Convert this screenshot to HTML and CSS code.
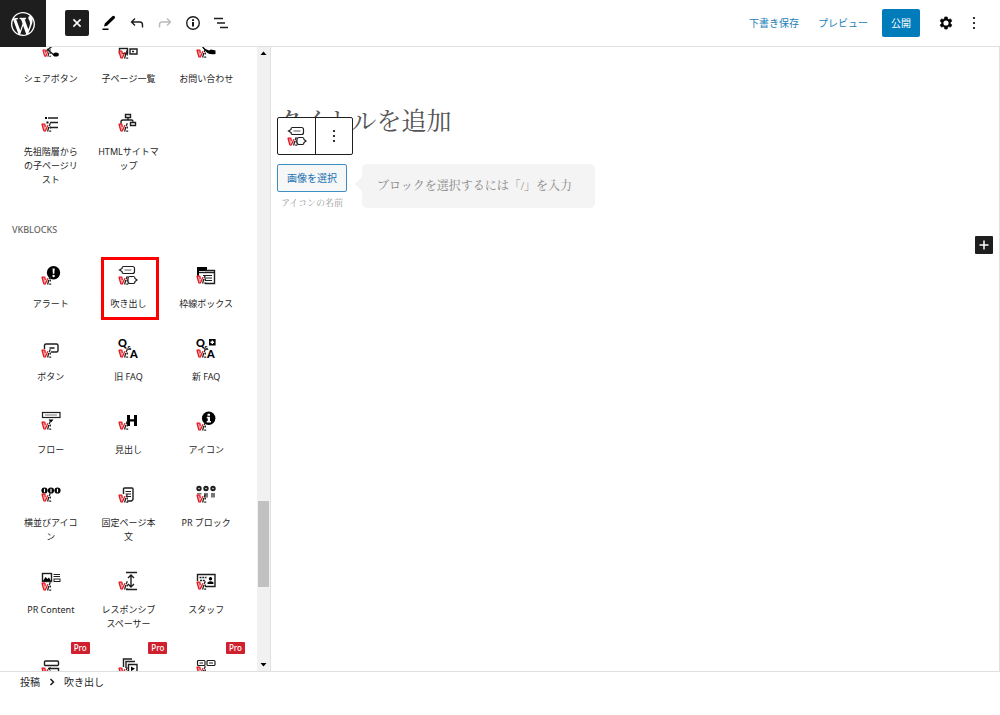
FILE: index.html
```html
<!DOCTYPE html>
<html lang="ja">
<head>
<meta charset="utf-8">
<meta name="viewport" content="width=device-width, initial-scale=1">
<title>投稿を編集</title>
<link rel="stylesheet" href="styles.css">
</head>
<body>
<svg class="sprite" aria-hidden="true">
  <symbol id="mark" viewBox="0 0 10 9"><path d="M.6.800h4.600L4.400 4 5.500 6.500 4 8.500H2.800z" fill="#f3a0a4"/><path d="M.8 1.200h3M.9 1 2.900 8M3.800 1.500 4.300 4M2.900 8h1.500L6.800 2.200" fill="none" stroke="#e5161f" stroke-width="1.200"/><path d="M9.300.200 8.200 3M7.800 3.800 6.600 8.500M9.300 3.600v1.800M8.200 8.200h2" fill="none" stroke="#222" stroke-width="1.300"/></symbol>
  <symbol id="share" viewBox="0 0 20 20"><path d="M4 12 15 3M6 9l8 7" class="s"/><ellipse cx="15" cy="14.500" rx="2.800" ry="2"/><use href="#mark" x="1" y="9" width="9" height="8"/></symbol>
  <symbol id="children" viewBox="0 0 20 20"><rect x="1.500" y="8.500" width="8" height="5" class="s"/><path d="M12 9h7v5h-7z" class="s"/><path d="M14 11.500h2" class="s"/><use href="#mark" x="0" y="10" width="10" height="9"/></symbol>
  <symbol id="phone" viewBox="0 0 20 20"><path d="M6 5q3 5 7 5.500l2-1 4.500 1V14q-8 2-13.500-7z"/><use href="#mark" x="0" y="9" width="10" height="9"/></symbol>
  <symbol id="tree-list" viewBox="0 0 20 20"><path d="M7 5h10M9 9.500h8M9 14.500h8" class="s"/><path d="M4 4h2v2H4zM5.500 8.500h2v2h-2z"/><use href="#mark" x="0" y="10" width="10" height="9"/></symbol>
  <symbol id="sitemap" viewBox="0 0 20 20"><path d="M7.500 1.500h5v3h-5zM12.500 9.500h5v3h-5zM10 5v2M3 11V9q0-2 2-2h9q1 0 1 2" class="s"/><use href="#mark" x="0" y="10" width="10" height="9"/></symbol>
  <symbol id="alert" viewBox="0 0 20 20"><circle cx="12.500" cy="7.700" r="6.700"/><path d="M11.500 3.500h2.200l-.4 5.300h-1.400z" fill="#fff"/><circle cx="12.600" cy="11" r="1.200" fill="#fff"/><use href="#mark" x="0" y="11" width="10" height="9"/></symbol>
  <symbol id="balloon" viewBox="0 0 20 20"><path d="M5.500 1.500h9q2 0 2 2v3q0 2-2 2h-9q-1.500 0-1.500-2L1.500 5 4 3.500q0-2 1.500-2z" class="m"/><path d="M6.500 5h7" class="t" stroke-opacity=".7"/><path d="M12 11.500h3.500q1.500 0 1.500 2l2 1.500-2 1.500q0 2-1.500 2H12q-2 0-2-2v-3q0-2 2-2z" class="m"/><use href="#mark" x="0" y="11" width="10" height="9"/></symbol>
  <symbol id="frame" viewBox="0 0 20 20"><path d="M1 2h10v4H3v6H1z"/><path d="M9 5.500h9.500v13H9" class="s"/><path d="M3 7.500h15" class="s"/><path d="M7 10.500h9M9 13h7M9 15.500h7" class="t"/><use href="#mark" x="0" y="10" width="10" height="9"/></symbol>
  <symbol id="button" viewBox="0 0 20 20"><path d="M3.500 11V7.500q0-1.500 1.500-1.500h10.500q1.500 0 1.500 1.500v5q0 1.500-1.500 1.500H10M8.500 10h5" class="s"/><use href="#mark" x="0" y="11" width="10" height="9"/></symbol>
  <symbol id="faq" viewBox="0 0 20 20"><text x="0" y="9" class="letter">Q</text><text x="9" y="12" class="amp">&amp;</text><text x="12" y="20" class="letter">A</text><use href="#mark" x="0" y="11" width="10" height="9"/></symbol>
  <symbol id="faq-new" viewBox="0 0 20 20"><text x="0" y="9" class="letter">Q</text><text x="8" y="12" class="amp">&amp;</text><text x="11" y="20" class="letter">A</text><path d="M13 1h6.600v6.500H13z"/><path d="M16.300 2.500v3.600M14.500 4.300h3.600" stroke="#fff" stroke-width="1.400"/><use href="#mark" x="0" y="11" width="10" height="9"/></symbol>
  <symbol id="flow" viewBox="0 0 20 20"><rect x="1.500" y="1.500" width="17.500" height="5" class="m"/><path d="M4 4h12" class="t" stroke-opacity=".6"/><path d="M7.500 8.500h5L10 11.500z"/><use href="#mark" x="0" y="10" width="10" height="9"/></symbol>
  <symbol id="heading" viewBox="0 0 20 20"><path d="M9 4h3v4.200h4V4h3v11h-3v-4.500h-4V15H9z"/><use href="#mark" x="0" y="10" width="10" height="9"/></symbol>
  <symbol id="icon" viewBox="0 0 20 20"><circle cx="12.700" cy="7.200" r="6.700"/><path d="M11.500 2.700h2.500v2h-2.500zM10.800 5.800h3.200v4.200h1v1.500h-4.300V10h1V7.300h-1z" fill="#fff"/><use href="#mark" x="0" y="11" width="10" height="9"/></symbol>
  <symbol id="icons" viewBox="0 0 20 20"><circle cx="3.500" cy="6.500" r="3.100"/><circle cx="10" cy="6.500" r="3.100"/><circle cx="16.500" cy="6.500" r="3.100"/><path d="M3.500 4.700v3.600M10 4.700v3.600M16.500 4.700v3.600" stroke="#fff" stroke-width="1.200"/><use href="#mark" x="0" y="9" width="10" height="9"/></symbol>
  <symbol id="page" viewBox="0 0 20 20"><path d="M5.500 10V5q0-1 1-1H14q1 0 1 1v10.500l-1.500 1.500H9" class="s"/><path d="M7.500 7.500h5.500M7.500 10h5.500M9 12.500h4" class="m"/><use href="#mark" x="0" y="10" width="10" height="9"/></symbol>
  <symbol id="pr" viewBox="0 0 20 20"><path d="M1 9h4.500v1.500H1zM8 9h4v4.500H8zM15 9h4v4.500h-4z" fill="#777"/><circle cx="3" cy="4.500" r="1.700" class="pr-dot"/><circle cx="10" cy="4.500" r="1.700" class="pr-dot"/><circle cx="17" cy="4.500" r="1.700" class="pr-dot"/><use href="#mark" x="0" y="10" width="10" height="9"/></symbol>
  <symbol id="pr-content" viewBox="0 0 20 20"><rect x="1.500" y="2.500" width="9" height="8" class="s"/><path d="m2 10 2.500-4 2 2L8 6.500l2 3.500z"/><path d="M12.500 3.500H19M12.500 5.500H19" class="t"/><rect x="13" y="8" width="6" height="2.500" class="t"/><use href="#mark" x="0" y="11" width="10" height="9"/></symbol>
  <symbol id="spacer" viewBox="0 0 20 20"><path d="M8 1.500h11M8 18.500h11M13 4v12M10 7l3-3 3 3M10 13l3 3 3-3" class="s"/><use href="#mark" x="0" y="10" width="10" height="9"/></symbol>
  <symbol id="staff" viewBox="0 0 20 20"><path d="M1.500 10V3.500H19v12H9" class="s"/><path d="M3.500 6.500h7M4 9.500h5" class="s" stroke-dasharray="2 .8"/><circle cx="14.500" cy="7.700" r="1.700"/><path d="M11.500 13v-1.500q3-2.500 6 0V13z"/><use href="#mark" x="0" y="10" width="10" height="9"/></symbol>
  <symbol id="stack" viewBox="0 0 20 20"><rect x="3.500" y="3" width="14" height="4.500" rx="1" class="s"/><path d="M7 10.500h10.500V14" class="s"/><use href="#mark" x="0" y="9" width="10" height="9"/></symbol>
  <symbol id="slider" viewBox="0 0 20 20"><path d="M5.500 9V1H14M8 10V3.500h9M10.500 6.500H19v9h-8.500z" class="s"/><path d="m13 8.500 4 2.300-4 2.300z"/><use href="#mark" x="0" y="9" width="10" height="9"/></symbol>
  <symbol id="cards" viewBox="0 0 20 20"><rect x="1.500" y="2.500" width="7.500" height="5" rx="1" class="m"/><rect x="11" y="2.500" width="8" height="5" rx="1" class="m"/><path d="M3.500 5H7M13 5h4" class="t"/><use href="#mark" x="0" y="8" width="10" height="9"/></symbol>
  <symbol id="dots" viewBox="0 0 20 20"><circle cx="10" cy="5" r="1.100"/><circle cx="10" cy="10" r="1.100"/><circle cx="10" cy="15" r="1.100"/></symbol>
</svg>

<div class="editor">
  <header class="topbar">
    <a class="logo" href="#" aria-label="WordPress"><svg viewBox="0 0 20 20"><path d="M20 10c0-5.510-4.490-10-10-10C4.480 0 0 4.490 0 10c0 5.520 4.480 10 10 10 5.510 0 10-4.480 10-10zM7.780 15.370L4.370 6.220c.55-.02 1.170-.08 1.170-.08.5-.06.44-1.130-.06-1.110 0 0-1.450.11-2.370.11-.18 0-.37 0-.58-.01C4.120 2.690 6.870 1.110 10 1.110c2.330 0 4.450.87 6.050 2.340-.68-.11-1.650.39-1.650 1.580 0 .74.45 1.360.9 2.100.35.61.55 1.360.55 2.460 0 1.490-1.400 5-1.400 5l-3.030-8.370c.54-.02.82-.17.82-.17.5-.05.44-1.250-.06-1.220 0 0-1.440.12-2.380.12-.87 0-2.330-.12-2.330-.12-.5-.03-.56 1.200-.06 1.220l.92.08 1.260 3.410zM17.410 10c.24-.64.74-1.870.43-4.250.7 1.290 1.050 2.710 1.050 4.250 0 3.290-1.730 6.240-4.400 7.780.97-2.590 1.940-5.200 2.920-7.780zM6.100 18.090C3.120 16.650 1.110 13.530 1.110 10c0-1.300.23-2.480.72-3.590C3.250 10.300 4.670 14.200 6.100 18.090zm4.030-6.630l2.580 6.980c-.86.29-1.760.45-2.710.45-.79 0-1.570-.11-2.290-.33.81-2.380 1.620-4.740 2.420-7.100z" fill="#fff"/></svg></a>
    <button class="close" aria-label="閉じる"><svg viewBox="0 0 10 10"><path d="m2 2 6 6M8 2 2 8" stroke="#fff" stroke-width="1.300"/></svg></button>
    <div class="tools">
      <button aria-label="編集"><svg viewBox="0 0 20 20"><path d="m5 13.500.8-3 7.500-7.300q1.300-1 2.300 0t0 2.300L8 12.800zM3.500 15.500h6V17h-6z"/></svg></button>
      <button aria-label="元に戻す"><svg viewBox="0 0 20 20"><path d="M8 5.500 4.500 9 8 12.500M4.500 9H13q2.500 0 2.500 3v2.500" class="s"/></svg></button>
      <button aria-label="やり直す" class="disabled"><svg viewBox="0 0 20 20"><path d="m12 5.500 3.500 3.500-3.500 3.500M15.500 9H7q-2.500 0-2.500 3v2.500" class="s"/></svg></button>
      <button aria-label="詳細"><svg viewBox="0 0 20 20"><circle cx="10" cy="10" r="6.300" class="s"/><path d="M9.100 9h1.800v4.500H9.100zM9.100 6.200h1.800V8H9.100z"/></svg></button>
      <button aria-label="リスト表示"><svg viewBox="0 0 20 20"><path d="M3 5.500h9M6 10h8M9 14.500h8" class="s"/></svg></button>
    </div>
    <div class="actions">
      <a href="#">下書き保存</a>
      <a href="#">プレビュー</a>
      <button class="publish">公開</button>
      <button class="tool" aria-label="設定"><svg viewBox="0 0 20 20"><path d="M8.800 4h2.400l.5 1.900 1 .6 1.900-.6 1.200 2L14.400 9.400v1.200l1.400 1.500-1.200 2-1.900-.6-1 .6-.5 1.900H8.800l-.5-1.900-1-.6-1.900.6-1.200-2 1.400-1.500V9.400L4.200 7.900l1.200-2 1.900.6 1-.6z" stroke="#111" stroke-width=".8"/><circle cx="10" cy="10" r="2.600" fill="#fff"/></svg></button>
      <button class="tool" aria-label="オプション"><svg><use href="#dots"/></svg></button>
    </div>
  </header>

  <aside class="inserter">
    <div class="list">
      <div class="grid">
        <button class="item"><svg><use href="#share"/></svg><span>シェアボタン</span></button>
        <button class="item"><svg><use href="#children"/></svg><span>子ページ一覧</span></button>
        <button class="item"><svg><use href="#phone"/></svg><span>お問い合わせ</span></button>
        <button class="item"><svg><use href="#tree-list"/></svg><span>先祖階層からの子ページリスト</span></button>
        <button class="item"><svg><use href="#sitemap"/></svg><span>HTMLサイトマップ</span></button>
      </div>
      <h2>VKBLOCKS</h2>
      <div class="grid">
        <button class="item"><svg><use href="#alert"/></svg><span>アラート</span></button>
        <button class="item highlighted"><svg><use href="#balloon"/></svg><span>吹き出し</span></button>
        <button class="item"><svg><use href="#frame"/></svg><span>枠線ボックス</span></button>
        <button class="item"><svg><use href="#button"/></svg><span>ボタン</span></button>
        <button class="item"><svg><use href="#faq"/></svg><span>旧 FAQ</span></button>
        <button class="item"><svg><use href="#faq-new"/></svg><span>新 FAQ</span></button>
        <button class="item"><svg><use href="#flow"/></svg><span>フロー</span></button>
        <button class="item"><svg><use href="#heading"/></svg><span>見出し</span></button>
        <button class="item"><svg><use href="#icon"/></svg><span>アイコン</span></button>
        <button class="item"><svg><use href="#icons"/></svg><span>横並びアイコン</span></button>
        <button class="item"><svg><use href="#page"/></svg><span>固定ページ本文</span></button>
        <button class="item"><svg><use href="#pr"/></svg><span>PR ブロック</span></button>
        <button class="item"><svg><use href="#pr-content"/></svg><span>PR Content</span></button>
        <button class="item"><svg><use href="#spacer"/></svg><span>レスポンシブスペーサー</span></button>
        <button class="item"><svg><use href="#staff"/></svg><span>スタッフ</span></button>
        <button class="item"><b class="pro">Pro</b><svg><use href="#stack"/></svg></button>
        <button class="item"><b class="pro">Pro</b><svg><use href="#slider"/></svg></button>
        <button class="item"><b class="pro">Pro</b><svg><use href="#cards"/></svg></button>
      </div>
    </div>
    <div class="scrollbar" aria-hidden="true">
      <svg viewBox="0 0 13 13"><path d="M3.500 8h6l-3-3.500z"/></svg>
      <i class="before"></i><i class="thumb"></i><i class="after"></i>
      <svg viewBox="0 0 13 13"><path d="M3.500 5h6l-3 3.500z"/></svg>
    </div>
  </aside>

  <main class="canvas">
    <input class="title" type="text" aria-label="タイトルを追加" placeholder="タイトルを追加">
    <section class="block">
      <div class="toolbar">
        <button aria-label="吹き出し"><svg><use href="#balloon"/></svg></button>
        <button aria-label="オプション"><svg><use href="#dots"/></svg></button>
      </div>
      <div class="person">
        <button class="choose">画像を選択</button>
        <input class="name" type="text" aria-label="アイコンの名前" placeholder="アイコンの名前">
      </div>
      <p class="speech">ブロックを選択するには「/」を入力</p>
    </section>
    <button class="add" aria-label="ブロックを追加"><svg viewBox="0 0 18 18"><path d="M9 4.500v9M4.500 9h9" stroke="#fff" stroke-width="1.500"/></svg></button>
  </main>

  <footer class="breadcrumb">
    <a href="#">投稿</a>
    <svg viewBox="0 0 8 8"><path d="m2.500 1 3 3-3 3" fill="none" stroke="#111" stroke-width="1.400"/></svg>
    <span>吹き出し</span>
  </footer>
</div>
</body>
</html>
```
FILE: styles.css
```css
* { box-sizing: border-box; }

body {
  margin: 0;
  background: #fff;
  color: #1e1e1e;
  font: 10px/14px "Noto Sans", "Noto Sans CJK JP", sans-serif;
}

button, input { font: inherit; color: inherit; }
button { padding: 0; border: 0; background: none; cursor: pointer; }
a { color: inherit; text-decoration: none; }
svg { display: block; }

.sprite { position: absolute; width: 0; height: 0; }
.s { fill: none; stroke: currentColor; stroke-width: 1.4; }
.m { fill: none; stroke: currentColor; stroke-width: 1.2; }
.t { fill: none; stroke: currentColor; stroke-width: 1; }
.pr-dot { fill: none; stroke: currentColor; stroke-width: 2; }
symbol { overflow: visible; }
.letter { font: 900 11px Lato, sans-serif; }
.amp { font: 900 6px Lato, sans-serif; }

.editor {
  display: grid;
  grid-template: auto minmax(0, 1fr) 44px / 271px minmax(0, 1fr);
  height: 100vh;
}

/* Top bar */
.topbar {
  grid-column: 1 / -1;
  display: flex;
  align-items: center;
  height: 47px;
  padding-right: 12px;
  border-bottom: 1px solid #e0e0e0;
}
.logo {
  display: grid;
  place-items: center;
  width: 46px;
  height: 47px;
  margin-right: 19px;
  align-self: flex-start;
  background: #1e1e1e;
}
.logo svg { width: 24px; height: 24px; }
.close {
  display: grid;
  place-items: center;
  width: 24px;
  height: 26px;
  border-radius: 2px;
  background: #1e1e1e;
}
.close svg { width: 12px; height: 12px; }
.tools { display: flex; margin-left: 6px; }
.tools button, .tool {
  display: grid;
  place-items: center;
  width: 28px;
  height: 28px;
}
.tools svg, .tool svg { width: 20px; height: 20px; }
.tools .disabled { color: #bbb; }
.actions { display: flex; align-items: center; margin-left: auto; }
.actions a { margin-right: 19px; color: #1a7fba; }
.actions a + a { margin-right: 14px; }
.publish {
  height: 28px;
  margin-right: 12px;
  padding: 0 9px;
  border-radius: 2px;
  background: #007cba;
  color: #fff;
}

/* Block inserter */
.inserter {
  display: flex;
  min-height: 0;
  border-right: 1px solid #e0e0e0;
}
.list {
  flex: 1;
  overflow: hidden;
  padding: 0 12px;
  font-size: 9px;
}
.grid {
  display: grid;
  grid-template-columns: repeat(3, 1fr);
  gap: 10px 0;
}
.grid:first-child { margin-top: -15px; }
.list h2 {
  margin: 27px 0 20px;
  color: #666;
  font-size: 9px;
  font-weight: 500;
}
.item {
  position: relative;
  display: flex;
  flex-direction: column;
  align-items: center;
  gap: 12px;
  padding: 8px 8px 9px;
}
.item svg { width: 20px; height: 20px; }
.highlighted::after {
  content: "";
  position: absolute;
  inset: 0 8px 0 11px;
  border: 3px solid #f00;
}
.pro {
  position: absolute;
  top: -8px;
  right: 0;
  padding: 0 3px;
  border-radius: 1px;
  background: #d0202e;
  color: #fff;
  font-size: 8px;
  font-weight: 500;
  line-height: 12px;
}
.scrollbar {
  display: flex;
  flex-direction: column;
  width: 13px;
  background: #f1f1f1;
}
.scrollbar svg { width: 13px; height: 13px; }
.before { flex: 440; }
.thumb { flex: 86; margin: 0 1px; background: #c1c1c1; }
.after { flex: 71; }

/* Canvas */
.canvas {
  display: flex;
  flex-direction: column;
  padding: 58px 6px 0;
  border-right: 1px solid #e0e0e0;
  font-family: "Liberation Serif", "Noto Serif CJK JP", "Noto Sans CJK JP", serif;
}
.title, .name {
  padding: 0;
  border: 0;
  background: none;
  outline: 0;
}
.title { width: 100%; height: 34px; font-size: 25px; line-height: 34px; }
.title::placeholder { color: #555; opacity: 1; }
.block {
  position: relative;
  display: flex;
  align-items: flex-start;
  gap: 15px;
  margin-top: 25px;
}
.toolbar {
  position: absolute;
  bottom: calc(100% + 9px);
  left: 0;
  display: flex;
  border: 1px solid #1e1e1e;
  border-radius: 2px;
  background: #fff;
}
.toolbar button {
  display: grid;
  place-items: center;
  width: 37px;
  height: 36px;
}
.toolbar button + button { border-left: 1px solid #1e1e1e; }
.toolbar svg { width: 20px; height: 20px; }
.person { display: flex; flex-direction: column; gap: 4px; width: 70px; }
.choose {
  height: 28px;
  border: 1px solid #3d8fc6;
  border-radius: 2px;
  background: #f6f7f7;
  color: #2271b1;
  font-family: "Noto Sans", "Noto Sans CJK JP", sans-serif;
}
.name { width: 100%; height: 14px; font-size: 9px; text-align: center; }
.name::placeholder { color: #999; opacity: 1; }
.speech {
  position: relative;
  margin: 0;
  padding: 12px 23px 12px 15px;
  border-radius: 5px;
  background: #f4f4f4;
  color: #888;
  font-size: 12px;
  line-height: 20px;
}
.speech::before {
  content: "";
  position: absolute;
  top: 13px;
  left: -7px;
  border: solid transparent;
  border-width: 7px 7px 7px 0;
  border-right-color: #f4f4f4;
}
.add {
  align-self: flex-end;
  margin-top: 26px;
  border-radius: 1px;
  background: #1e1e1e;
}
.add svg { width: 18px; height: 18px; }

/* Breadcrumb */
.breadcrumb {
  grid-column: 1 / -1;
  display: flex;
  align-items: center;
  gap: 8px;
  height: 20px;
  padding-left: 20px;
  border-top: 1px solid #e0e0e0;
}
.breadcrumb svg { width: 8px; height: 8px; }
```
